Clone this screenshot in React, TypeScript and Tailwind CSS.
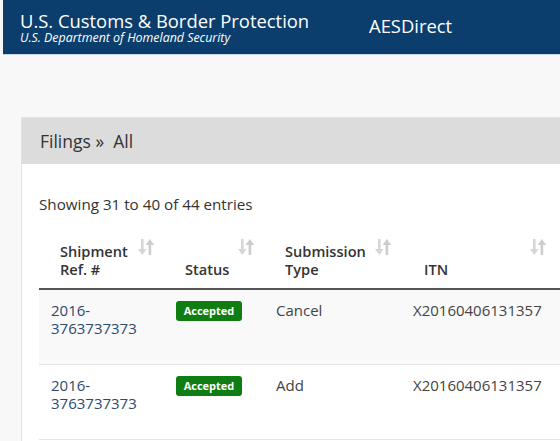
import React from "react";

const SortIcon = () => (
  <svg width="18" height="20" viewBox="0 0 18 20" className="absolute right-[9px] top-[5px]">
    <g fill="#d6d6d6">
      <rect x="4" y="2" width="2.6" height="12" />
      <polygon points="1,12 9.6,12 5.3,18" />
    </g>
    <g fill="#cdcdcd">
      <rect x="11.6" y="6" width="2.6" height="12" />
      <polygon points="8.6,8 17.2,8 12.9,2" />
    </g>
  </svg>
);

const rows = [
  { ref1: "2016-", ref2: "3763737373", type: "Cancel", itn: "X20160406131357", bg: "bg-[#f9f9f9]" },
  { ref1: "2016-", ref2: "3763737373", type: "Add", itn: "X20160406131357", bg: "bg-white" },
];

export default function App() {
  return (
    <div className="w-[560px] h-[441px] overflow-hidden bg-[#f8f8f8] text-[#333]" style={{ fontFamily: '"Open Sans", "Noto Sans", sans-serif' }}>
      <div className="ml-[3px] h-[55px] bg-[#0b3e6d] border-b border-[#c9d6e2] flex items-start">
        <div className="pl-[17px] pt-[10px] w-[366px]">
          <div className="text-white text-[18.4px] leading-[21px]">U.S. Customs &amp; Border Protection</div>
          <div className="text-white italic text-[12.4px] leading-[13px]">U.S. Department of Homeland Security</div>
        </div>
        <div className="text-white text-[18.4px] leading-[22px] pt-[15px]">AESDirect</div>
      </div>
      <div className="ml-[21px] mt-[62px] border-l border-t border-[#e2e2e2]">
        <div className="h-[46px] bg-[#dcdcdc] flex items-center pl-[18px] text-[17.5px] text-[#333]">
          Filings »&nbsp; All
        </div>
        <div className="bg-white pl-[17px] pt-[30px] h-[300px]">
          <div className="text-[15.2px] leading-[20px] text-[#333]">Showing 31 to 40 of 44 entries</div>
          <table className="mt-[18px] border-collapse text-[15px] leading-[18px]" style={{ width: 540 }}>
            <thead>
              <tr className="border-b-2 border-[#555] align-bottom text-[14.6px]">
                <th className="relative w-[125px] text-left font-semibold pl-[21px] pb-[10px] pt-[10px]">
                  Shipment<br />Ref. #<SortIcon />
                </th>
                <th className="relative w-[100px] text-left font-semibold pl-[21px] pb-[10px]">
                  Status<SortIcon />
                </th>
                <th className="relative w-[137px] text-left font-semibold pl-[21px] pb-[10px]">
                  Submission<br />Type<SortIcon />
                </th>
                <th className="relative w-[155px] text-left font-semibold pl-[23px] pb-[10px]">
                  ITN<SortIcon />
                </th>
                <th></th>
              </tr>
            </thead>
            <tbody>
              {rows.map((r, i) => (
                <tr key={i} className={`${r.bg} border-b border-[#e6e6e6] align-top`}>
                  <td className="h-[75px] pl-3 pt-[11px] text-[#2d4a6e]">
                    {r.ref1}<br />{r.ref2}
                  </td>
                  <td className="pl-3 pt-[10px]">
                    <span className="inline-flex items-center justify-center w-[66px] h-[20px] rounded-[3px] bg-[#0e7d12] text-white text-[11px] font-bold">Accepted</span>
                  </td>
                  <td className="pl-3 pt-[11px] text-[#444]">{r.type}</td>
                  <td className="pl-3 pt-[11px] text-[#444]">{r.itn}</td>
                  <td></td>
                </tr>
              ))}
            </tbody>
          </table>
        </div>
      </div>
    </div>
  );
}
